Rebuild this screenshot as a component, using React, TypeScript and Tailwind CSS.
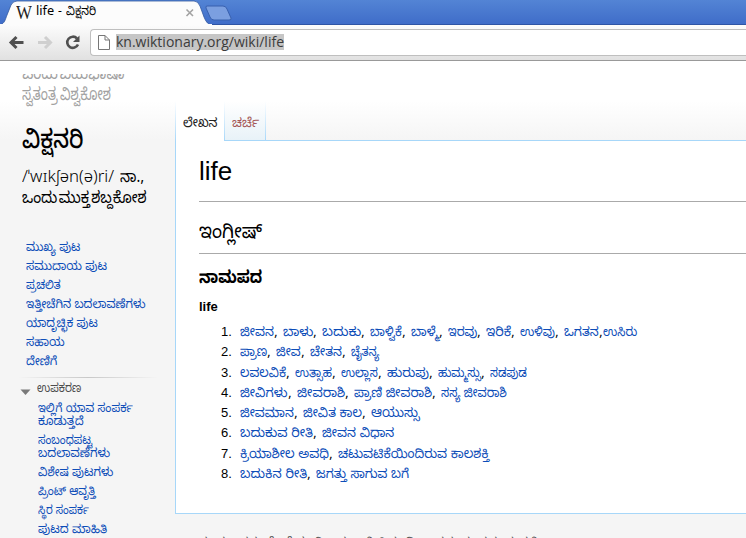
import { Fragment, useLayoutEffect, useRef, useState } from 'react';
import type { ReactNode } from 'react';

/** One line of text, condensed or widened to the given width class. */
function Fit({ w, className = '', children }: { w: string; className?: string; children: ReactNode }) {
  const box = useRef<HTMLSpanElement>(null);
  const inner = useRef<HTMLSpanElement>(null);
  const [scale, setScale] = useState(1);
  useLayoutEffect(() => {
    const measure = () => {
      if (box.current && inner.current && inner.current.offsetWidth) {
        setScale(box.current.offsetWidth / inner.current.offsetWidth);
      }
    };
    measure();
    document.fonts.ready.then(measure);
  }, []);
  return (
    <span ref={box} className={`flex shrink-0 ${w} ${className}`}>
      <span ref={inner} className="shrink-0 origin-left whitespace-pre" style={{ transform: `scaleX(${scale})` }}>
        {children}
      </span>
    </span>
  );
}

function TabStrip() {
  return (
    <div className="flex h-[25px] bg-linear-to-b from-[#5384d5] to-[#3f6cc8] shadow-[inset_0_-1px_0_#2f55a5]">
      <div className="relative h-[25px] w-[240px]">
        <svg className="absolute inset-0" width="240" height="25" viewBox="0 0 240 25">
          <path d="M0 25 C5 23 5 20 7 15 L11 5 Q13 1 17 1 H194 Q198 1 200 6 L204 17 Q207 25 212 25Z" fill="#fcfcfc" stroke="#31589f" strokeWidth=".8" />
          <path d="M0 25 H212" stroke="#fcfcfc" strokeWidth="2" />
          <path d="M207 6 H223 Q226 6 227 9 L231 18 Q232 20 229 20 H214 Q211 20 210 17 L206 8 Q205.500 6 207 6Z" fill="#7b9fe0" stroke="#3860ae" />
          <path d="M186.500 9.500 L193 16 M193 9.500 L186.500 16" stroke="#a3a3a3" strokeWidth="1.600" />
        </svg>
        <div className="relative flex h-[25px] pl-4">
          <Fit w="w-4" className="pt-[3px] font-['Liberation_Serif',serif] text-[18px] leading-5 text-[#222]">W</Fit>
          <Fit w="w-[18px]" className="ml-1 pt-px font-['Noto_Sans',sans-serif] text-[12px] leading-[19px] text-black">life</Fit>
          <Fit w="w-[4px]" className="ml-[4px] pt-px font-['Noto_Sans',sans-serif] text-[12px] leading-[19px] text-black">-</Fit>
          <Fit w="w-[30px]" className="ml-[4px] pt-[4px] text-[12px] leading-[19px] text-black">ವಿಕ್ಷನರಿ</Fit>
        </div>
      </div>
    </div>
  );
}

function Toolbar() {
  return (
    <div className="flex h-9 border-b border-[#999] bg-linear-to-b from-[#fcfcfc] to-[#e1e1e1] pt-1">
      <svg width="90" height="28" viewBox="0 0 90 28" fill="none">
        <path d="M23.500 13.500 H11 M16.500 8 L11 13.500 L16.500 19" stroke="#505050" strokeWidth="3" />
        <path d="M38 13.500 H50 M45 8 L50.500 13.500 L45 19" stroke="#cfcfcf" strokeWidth="3" />
        <path d="M77 9.500 A5.600 5.600 0 1 0 78 15.500" stroke="#505050" strokeWidth="2.600" />
        <path d="M79.500 6.500 V13 H73Z" fill="#505050" />
      </svg>
      <div className="flex h-[27px] flex-1 rounded-l-[4px] border border-r-0 border-[#bfbfbf] bg-white pl-[7px]">
        <svg className="mt-[5px]" width="12" height="16" viewBox="0 0 12 16">
          <path d="M.5 .5 H7 L11.500 5 V14.500 H.5Z M7 .5 V5 H11.500" fill="#fff" stroke="#777" />
        </svg>
        <div className="mt-1 ml-[6px] h-4 w-[168px] bg-[#c6c6c6]">
          <Fit w="w-[168px]" className="font-['Open_Sans','Noto_Sans',sans-serif] text-[14.500px] leading-[15px] text-[#3c3c3c]">kn.wiktionary.org/wiki/life</Fit>
        </div>
      </div>
    </div>
  );
}

const mainLinks: [string, string][] = [
  ['ಮುಖ್ಯ ಪುಟ', 'w-[54px]'],
  ['ಸಮುದಾಯ ಪುಟ', 'w-[81px]'],
  ['ಪ್ರಚಲಿತ', 'w-[35px]'],
  ['ಇತ್ತೀಚೆಗಿನ ಬದಲಾವಣೆಗಳು', 'w-[120px]'],
  ['ಯಾದೃಚ್ಛಿಕ ಪುಟ', 'w-[72px]'],
  ['ಸಹಾಯ', 'w-[39px]'],
  ['ದೇಣಿಗೆ', 'w-[31px]'],
];

const toolLinks: [string, string][][] = [
  [['ಇಲ್ಲಿಗೆ ಯಾವ ಸಂಪರ್ಕ', 'w-[95px]'], ['ಕೂಡುತ್ತದೆ', 'w-[46px]']],
  [['ಸಂಬಂಧಪಟ್ಟ', 'w-[54px]'], ['ಬದಲಾವಣೆಗಳು', 'w-[72px]']],
  [['ವಿಶೇಷ ಪುಟಗಳು', 'w-[75px]']],
  [['ಪ್ರಿಂಟ್ ಆವೃತ್ತಿ', 'w-[58px]']],
  [['ಸ್ಥಿರ ಸಂಪರ್ಕ', 'w-[51px]']],
  [['ಪುಟದ ಮಾಹಿತಿ', 'w-[69px]']],
];

function Sidebar() {
  return (
    <aside className="w-[175px] shrink-0 text-[#0d4db8]">
      <div className="mt-[13px] ml-[22px] flex h-[150px] flex-col text-black">
        <div className="flex h-[7px] items-end overflow-hidden text-[#a2a2a2]">
          <Fit w="w-[103px]" className="text-[17px] leading-[9px] [word-spacing:-3px]">ಒಂದು ಬಹುಭಾಷಾ</Fit>
        </div>
        <Fit w="w-[89px]" className="mt-[5px] text-[17px] leading-[24px] text-[#a2a2a2] [word-spacing:-2px]">ಸ್ವತಂತ್ರ ವಿಶ್ವಕೋಶ</Fit>
        <Fit w="w-[61px]" className="mt-[18px] text-[26px] leading-[34px] font-medium">ವಿಕ್ಷನರಿ</Fit>
        <div className="mt-[3px] flex h-[23px]">
          <Fit w="w-[92px]" className="font-['Noto_Sans',sans-serif] text-[17px] leading-[22px] font-light">/ˈwɪkʃən(ə)ri/</Fit>
          <Fit w="w-[24px]" className="ml-[6px] pt-[4px] text-[16px] leading-[22px]">ನಾ.,</Fit>
        </div>
        <Fit w="w-[125px]" className="pt-[3px] text-[16px] leading-[21px] [word-spacing:-3px]">ಒಂದು ಮುಕ್ತ ಶಬ್ದಕೋಶ</Fit>
      </div>
      <nav className="mt-4 ml-[26px] text-[12px] leading-[19px]">
        {mainLinks.map(([t, w]) => <Fit key={t} w={w}>{t}</Fit>)}
      </nav>
      <div className="mt-1 ml-[18px] h-px w-[140px] bg-linear-to-r from-transparent via-[#c8c8c8] to-transparent" />
      <div className="mt-[1px] flex h-[19px] items-start pl-[20px] text-[#4d4d4d]">
        <svg className="mt-[10px]" width="11" height="7" viewBox="0 0 11 7"><path d="M.5 .5 H10.500 L5.500 6Z" fill="#797979" /></svg>
        <Fit w="w-[44px]" className="ml-[6px] pt-[2px] text-[12px] leading-[19px]">ಉಪಕರಣ</Fit>
      </div>
      <nav className="mt-[6px] ml-[38px] flex flex-col gap-[6px] text-[12px] leading-[13px]">
        {toolLinks.map((lines) => (
          <div key={lines[0][0]}>
            {lines.map(([t, w]) => <Fit key={t} w={w}>{t}</Fit>)}
          </div>
        ))}
      </nav>
    </aside>
  );
}

const senses: [string, string][][] = [
  [['ಜೀವನ', 'w-[34px]'], ['ಬಾಳು', 'w-[30px]'], ['ಬದುಕು', 'w-[39px]'], ['ಬಾಳ್ವಿಕೆ', 'w-[32px]'], ['ಬಾಳ್ಮೆ', 'w-[28px]'], ['ಇರವು', 'w-[29px]'], ['ಇರಿಕೆ', 'w-[25px]'], ['ಉಳಿವು', 'w-[35px]'], ['ಒಗತನ', 'w-[35px]'], ['ಉಸಿರು', 'w-[34px]']],
  [['ಪ್ರಾಣ', 'w-[27px]'], ['ಜೀವ', 'w-[25px]'], ['ಚೇತನ', 'w-[32px]'], ['ಚೈತನ್ಯ', 'w-[28px]']],
  [['ಲವಲವಿಕೆ', 'w-[46px]'], ['ಉತ್ಸಾಹ', 'w-[37px]'], ['ಉಲ್ಲಾಸ', 'w-[37px]'], ['ಹುರುಪು', 'w-[42px]'], ['ಹುಮ್ಮಸ್ಸು', 'w-[43px]'], ['ಸಡಪುಡ', 'w-[37px]']],
  [['ಜೀವಿಗಳು', 'w-[48px]'], ['ಜೀವರಾಶಿ', 'w-[48px]'], ['ಪ್ರಾಣಿ ಜೀವರಾಶಿ', 'w-[78px]'], ['ಸಸ್ಯ ಜೀವರಾಶಿ', 'w-[66px]']],
  [['ಜೀವಮಾನ', 'w-[54px]'], ['ಜೀವಿತ ಕಾಲ', 'w-[59px]'], ['ಆಯುಸ್ಸು', 'w-[49px]']],
  [['ಬದುಕುವ ರೀತಿ', 'w-[73px]'], ['ಜೀವನ ವಿಧಾನ', 'w-[72px]']],
  [['ಕ್ರಿಯಾಶೀಲ ಅವಧಿ', 'w-[89px]'], ['ಚಟುವಟಿಕೆಯಿಂದಿರುವ ಕಾಲಶಕ್ತಿ', 'w-[151px]']],
  [['ಬದುಕಿನ ರೀತಿ', 'w-[67px]'], ['ಜಗತ್ತು ಸಾಗುವ ಬಗೆ', 'w-[93px]']],
];

function Article() {
  return (
    <article className="h-[373px] border-b border-l border-[#a7d7f9] bg-white pt-[12px] pl-[23px] text-black">
      <h1 className="h-[49px] border-b border-[#aaa]"><Fit w="w-[33px]" className="font-['Liberation_Sans',sans-serif] text-[26px] leading-[36px]">life</Fit></h1>
      <h2 className="mt-[17px] h-[35px] border-b border-[#aaa] pt-[4px]"><Fit w="w-[63px]" className="text-[20px] leading-[26px]">ಇಂಗ್ಲೀಷ್</Fit></h2>
      <h3 className="mt-[14px]"><Fit w="w-[63px]" className="text-[17px] leading-[26px] font-bold">ನಾಮಪದ</Fit></h3>
      <p className="mt-[3px] font-['Liberation_Sans',sans-serif] text-[13px] leading-[19px] font-bold">life</p>
      <ol className="mt-[6px] ml-[22px] text-[13px] leading-[20.25px]">
        {senses.map((words, i) => (
          <li key={i} className="flex h-[20.25px]">
            <span className="w-[19px] font-['Liberation_Sans',sans-serif]">{i + 1}.</span>
            <span className="flex pt-[2px]">
              {words.map(([t, w], j) => (
                <Fragment key={t}>
                  <Fit w={w} className="text-[#0d4db8]">{t}</Fit>
                  {j < words.length - 1 && <span className={i === 0 && j === 8 ? 'w-[4px]' : 'w-[9px]'}>,</span>}
                </Fragment>
              ))}
            </span>
          </li>
        ))}
      </ol>
    </article>
  );
}

export default function App() {
  return (
    <div className="flex h-[538px] w-[746px] flex-col overflow-hidden bg-[#f5f5f5] font-['Lohit_Kannada','Noto_Sans_Kannada','Liberation_Sans',sans-serif]">
      <TabStrip />
      <Toolbar />
      <div className="flex min-h-0 flex-1 bg-[linear-gradient(to_bottom,#fff_0,#fff_40px,#f5f5f5_79px)]">
        <Sidebar />
        <main className="flex min-w-0 flex-1 flex-col">
          <div className="flex h-20 pt-[40px] text-[13px]">
            <div className="h-10 w-px bg-linear-to-b from-white to-[#a7d7f9]" />
            <div className="h-10 w-[48px] bg-white pt-[15px] pl-[7px]"><Fit w="w-[35px]" className="leading-[18px] text-[#222]">ಲೇಖನ</Fit></div>
            <div className="h-10 w-px bg-linear-to-b from-white to-[#a7d7f9]" />
            <div className="h-10 w-[40px] border-b border-[#a7d7f9] bg-linear-to-b from-white to-[#e8f2f8] pt-[15px] pl-[7px]"><Fit w="w-[27px]" className="leading-[18px] text-[#a55858]">ಚರ್ಚೆ</Fit></div>
            <div className="h-10 w-px bg-linear-to-b from-white to-[#a7d7f9]" />
            <div className="h-10 flex-1 border-b border-[#a7d7f9]" />
          </div>
          <Article />
          <p className="ml-6 h-6 overflow-hidden pt-[22px]">
            <Fit w="w-[340px]" className="text-[11px] leading-[16px] text-[#555]">ಈ ಪುಟವನ್ನು ಕೊನೆಯಾಗಿ ಬದಲಾಯಿಸಿದ್ದು ದಿನಾಂಕದಂದು ಸಮಯದಲ್ಲಿ</Fit>
          </p>
        </main>
      </div>
    </div>
  );
}
